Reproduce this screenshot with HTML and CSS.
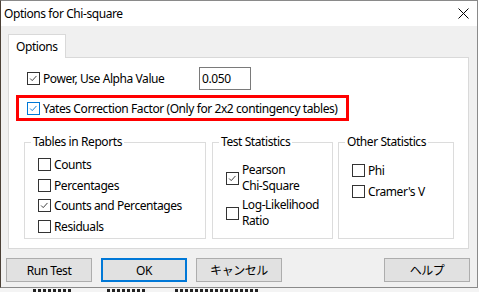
FILE: index.html
```html
<!DOCTYPE html>
<html lang="en">
<head>
    <meta charset="UTF-8">
    <title>Options for Chi-square</title>
    <link rel="stylesheet" href="styles.css">
</head>
<body>
    <div class="window">
        <div class="titlebar">
            <span class="title">Options for Chi-square</span>
            <svg class="close" width="11" height="11" viewBox="0 0 11 11">
                <path d="M0.5 0.5 L10.5 10.5 M10.5 0.5 L0.5 10.5" stroke="#000" stroke-width="1" fill="none"/>
            </svg>
        </div>

        <div class="client">
            <div class="tabs">
                <div class="tab">Options</div>
            </div>

            <div class="panel">
                <div class="power-row">
                    <label class="check power-label">
                        <span class="box"><svg viewBox="0 0 13 13"><polyline points="2.5,6.5 5,9 10,3.5"/></svg></span>
                        Power, Use Alpha Value
                    </label>
                    <input class="alpha" type="text" value="0.050">
                </div>

                <div class="yates-row">
                    <label class="check focus">
                        <span class="box"><svg viewBox="0 0 13 13"><polyline points="2.5,6.5 5,9 10,3.5"/></svg></span>
                        Yates Correction Factor (Only for 2x2 contingency tables)
                    </label>
                </div>

                <div class="groups">
                    <fieldset class="group tables">
                        <legend>Tables in Reports</legend>
                        <div class="items">
                            <label class="check row"><span class="box"></span>Counts</label>
                            <label class="check row"><span class="box"></span>Percentages</label>
                            <label class="check row"><span class="box"><svg viewBox="0 0 13 13"><polyline points="2.5,6.5 5,9 10,3.5"/></svg></span>Counts and Percentages</label>
                            <label class="check row"><span class="box"></span>Residuals</label>
                        </div>
                    </fieldset>

                    <fieldset class="group tests">
                        <legend>Test Statistics</legend>
                        <div class="items">
                            <label class="check two-line"><span class="box"><svg viewBox="0 0 13 13"><polyline points="2.5,6.5 5,9 10,3.5"/></svg></span><span>Pearson<br>Chi-Square</span></label>
                            <label class="check two-line"><span class="box"></span><span>Log-Likelihood<br>Ratio</span></label>
                        </div>
                    </fieldset>

                    <fieldset class="group others">
                        <legend>Other Statistics</legend>
                        <div class="items">
                            <label class="check row"><span class="box"></span>Phi</label>
                            <label class="check row"><span class="box"></span>Cramer's V</label>
                        </div>
                    </fieldset>
                </div>
            </div>
        </div>

        <div class="footer">
            <button class="btn">Run Test</button>
            <button class="btn default">OK</button>
            <button class="btn">キャンセル</button>
            <button class="btn help">ヘルプ</button>
        </div>
    </div>

    <div class="behind">
        <span class="dash d1"></span>
        <span class="dash d2"></span>
        <span class="dash d3"></span>
    </div>
</body>
</html>
```

FILE: styles.css
```css
* {
    box-sizing: border-box;
}

body {
    margin: 0;
    width: 479px;
    height: 292px;
    overflow: hidden;
    font-family: "Noto Sans", "Noto Sans CJK JP", sans-serif;
    font-size: 12px;
    letter-spacing: -0.42px;
    color: #000;
    background: #fff;
    white-space: nowrap;
}

.window {
    width: 478px;
    height: 288px;
    border: 1px solid #8a8a8a;
    border-left-color: #4b4036;
    background: #f0f0f0;
    display: flex;
    flex-direction: column;
}

.titlebar {
    height: 25px;
    background: #fff;
    display: flex;
    align-items: center;
    justify-content: space-between;
    padding: 0 8px 0 3px;
}

.close {
    display: block;
}

.client {
    padding: 8px 8px 0 7px;
}

.tabs {
    display: flex;
}

.tab {
    position: relative;
    z-index: 1;
    width: 58px;
    height: 24px;
    margin-bottom: -1px;
    padding: 3px 0 0 7px;
    background: #fff;
    border: 1px solid #d9d9d9;
    border-bottom: none;
}

.panel {
    height: 192px;
    background: #fff;
    border: 1px solid #d9d9d9;
    padding: 9px 0 0 7px;
}

/* checkboxes */
.check {
    display: flex;
    align-items: center;
}

.box {
    flex: none;
    width: 13px;
    height: 13px;
    margin-right: 3px;
    border: 1px solid #333;
    background: #fff;
}

.box svg {
    display: block;
    width: 11px;
    height: 11px;
}

.box polyline {
    fill: none;
    stroke: #333;
    stroke-width: 1.1;
}

.focus .box {
    border-color: #0078d7;
}

.focus .box polyline {
    stroke: #0078d7;
}

.power-row {
    display: flex;
    align-items: center;
    height: 23px;
    padding-left: 11px;
}

.power-label {
    width: 172px;
}

.alpha {
    width: 52px;
    height: 23px;
    margin: 0;
    padding: 0 2px;
    border: 1px solid #7a7a7a;
    font-family: inherit;
    font-size: 12px;
    letter-spacing: -0.42px;
    color: #000;
    outline: none;
}

.yates-row {
    display: flex;
    align-items: center;
    width: 333px;
    height: 26px;
    margin-top: 5px;
    padding-left: 8px;
    border: 3px solid #ff0000;
}

/* group boxes */
.groups {
    display: flex;
    height: 105px;
    margin: 13px 0 0 8px;
}

.group {
    margin: 0;
    padding: 0;
    min-width: 0;
    border: 1px solid #dcdcdc;
}

.group legend {
    margin-left: 6px;
    padding: 0 2px;
    line-height: 16px;
}

.tables {
    width: 182px;
}

.tests {
    width: 121px;
    margin-left: 6px;
}

.others {
    width: 116px;
    margin-left: 5px;
}

.items {
    padding-left: 13px;
}

.tables .items {
    padding-top: 4px;
}

.tables .row {
    height: 20.7px;
}

.tests .items {
    padding-top: 12px;
    display: flex;
    flex-direction: column;
    gap: 3px;
}

.two-line {
    line-height: 16px;
}

.others .items {
    padding-top: 10px;
}

.others .row {
    height: 21px;
}

/* buttons */
.footer {
    display: flex;
    padding: 9px 7px 0 5px;
}

.btn {
    width: 86px;
    height: 24px;
    margin: 0 9px 0 0;
    padding: 0;
    background: #e1e1e1;
    border: 1px solid #adadad;
    font-family: inherit;
    font-size: 12px;
    letter-spacing: -0.42px;
    color: #000;
}

.btn.default {
    border: 2px solid #0078d7;
}

.btn.help {
    margin: 0 0 0 auto;
}

.behind {
    position: relative;
    height: 4px;
    background: #f4f4f4;
}

.dash {
    position: absolute;
    top: 1px;
    height: 3px;
    background: repeating-linear-gradient(90deg, #222 0 3px, transparent 3px 5px);
}

.d1 { left: 33px; width: 40px; }
.d2 { left: 107px; width: 40px; }
.d3 { left: 175px; width: 84px; }
```
